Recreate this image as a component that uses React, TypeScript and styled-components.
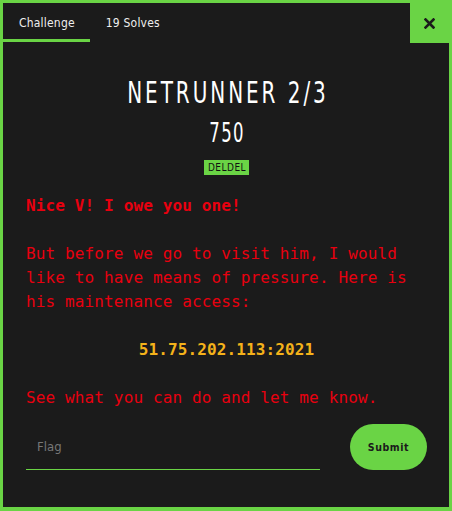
import React from "react";
import styled, { createGlobalStyle } from "styled-components";

const Global = createGlobalStyle`
  html, body { margin: 0; padding: 0; background: #1b1b1b; }
  * { box-sizing: border-box; }
`;

const green = "#6ad445";
const condensed = `"DejaVu Sans Condensed", "Roboto", sans-serif`;
const mono = `"DejaVu Sans Mono", "Liberation Mono", monospace`;

const Modal = styled.div`
  width: 452px;
  height: 511px;
  border: 3px solid ${green};
  border-bottom-width: 4px;
  background: #1b1b1b;
  display: flex;
  flex-direction: column;
`;

const TabBar = styled.div`
  display: flex;
  align-items: stretch;
  height: 39px;
`;

const Tab = styled.div<{ $active?: boolean }>`
  font-family: ${condensed};
  font-size: 12px;
  letter-spacing: 0.2px;
  color: #eeeeee;
  padding: 4px 15px 0 16px;
  display: flex;
  align-items: center;
  border-bottom: 3px solid ${(p) => (p.$active ? green : "transparent")};
`;

const Spacer = styled.div`
  flex: 1;
`;

const Close = styled.button`
  width: 39px;
  height: 40px;
  background: ${green};
  border: none;
  display: flex;
  align-items: center;
  justify-content: center;
  padding: 0;
`;

const Body = styled.div`
  padding: 0 22px 0 23px;
  display: flex;
  flex-direction: column;
`;

const Title = styled.h1`
  margin: 33px 0 0;
  font-family: ${condensed};
  font-weight: normal;
  font-size: 30px;
  letter-spacing: 4px;
  text-indent: 4px;
  color: #ffffff;
  text-align: center;
  line-height: 36px;
  transform: scaleX(0.74);
`;

const Points = styled.div`
  margin-top: 7px;
  font-family: ${condensed};
  font-size: 27px;
  letter-spacing: 2px;
  text-indent: 2px;
  color: #ffffff;
  text-align: center;
  line-height: 30px;
  transform: scaleX(0.68);
`;

const TagRow = styled.div`
  display: flex;
  justify-content: center;
  margin-top: 12px;
`;

const Tag = styled.span`
  background: ${green};
  color: #111;
  font-family: ${condensed};
  font-size: 10px;
  letter-spacing: 0.5px;
  padding: 1px 3px 1px 4px;
  line-height: 13px;
`;

const Description = styled.div`
  margin-top: 19px;
  font-family: ${mono};
  font-size: 16px;
  letter-spacing: 0.13px;
  line-height: 24px;
  color: #e8000f;
`;

const P = styled.p<{ $bold?: boolean; $center?: boolean; $amber?: boolean }>`
  margin: 0 0 24px;
  font-weight: ${(p) => (p.$bold ? "bold" : "normal")};
  text-align: ${(p) => (p.$center ? "center" : "left")};
  color: ${(p) => (p.$amber ? "#f4b21a" : "inherit")};
`;

const FormRow = styled.div`
  display: flex;
  align-items: center;
  justify-content: space-between;
  margin-top: -10px;
`;

const FlagInput = styled.input`
  width: 294px;
  height: 45px;
  background: transparent;
  border: none;
  border-bottom: 1px solid ${green};
  padding: 0 11px;
  font-family: ${condensed};
  font-size: 13px;
  color: #ddd;
  outline: none;
  &::placeholder { color: #777; }
`;

const Submit = styled.button`
  width: 77px;
  height: 46px;
  border-radius: 23px;
  border: none;
  background: ${green};
  color: #1b1b1b;
  font-family: ${condensed};
  font-weight: bold;
  font-size: 10.5px;
  letter-spacing: 0.6px;
  margin-top: 0;
`;

export default function App() {
  return (
    <>
      <Global />
      <Modal>
        <TabBar>
          <Tab $active>Challenge</Tab>
          <Tab>19 Solves</Tab>
          <Spacer />
          <Close aria-label="close">
            <svg width="11" height="11" viewBox="0 0 11 11">
              <path d="M1.5 1.5 L9.5 9.5 M9.5 1.5 L1.5 9.5" stroke="#1b1b1b" strokeWidth="2.6" strokeLinecap="square" />
            </svg>
          </Close>
        </TabBar>
        <Body>
          <Title>NETRUNNER 2/3</Title>
          <Points>750</Points>
          <TagRow>
            <Tag>DELDEL</Tag>
          </TagRow>
          <Description>
            <P $bold>Nice V! I owe you one!</P>
            <P>But before we go to visit him, I would like to have means of pressure. Here is his maintenance access:</P>
            <P $bold $center $amber>51.75.202.113:2021</P>
            <P>See what you can do and let me know.</P>
          </Description>
          <FormRow>
            <FlagInput placeholder="Flag" />
            <Submit>Submit</Submit>
          </FormRow>
        </Body>
      </Modal>
    </>
  );
}
